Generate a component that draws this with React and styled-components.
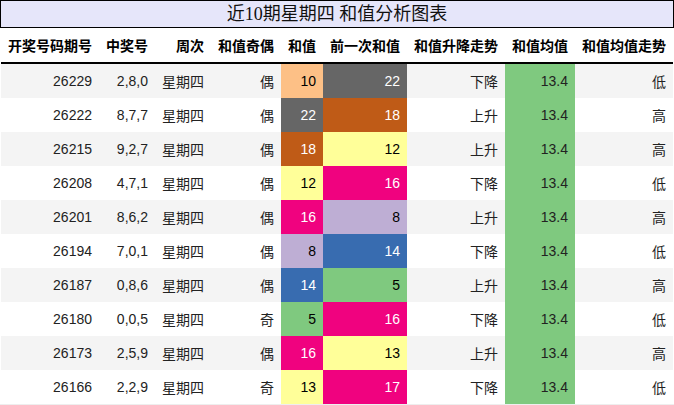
import React from 'react';
import styled, { createGlobalStyle } from 'styled-components';

const GlobalStyle = createGlobalStyle`
  body {
    margin: 0;
    background: #fff;
    font-family: "Liberation Sans", "Noto Sans CJK SC", sans-serif;
  }
`;

const columns = ['开奖号码期号', '中奖号', '周次', '和值奇偶', '和值', '前一次和值', '和值升降走势', '和值均值', '和值均值走势'];

const rows = [
  { issue: '26229', nums: '2,8,0', parity: '偶', sum: 10, prev: 22, trend: '下降', level: '低' },
  { issue: '26222', nums: '8,7,7', parity: '偶', sum: 22, prev: 18, trend: '上升', level: '高' },
  { issue: '26215', nums: '9,2,7', parity: '偶', sum: 18, prev: 12, trend: '上升', level: '高' },
  { issue: '26208', nums: '4,7,1', parity: '偶', sum: 12, prev: 16, trend: '下降', level: '低' },
  { issue: '26201', nums: '8,6,2', parity: '偶', sum: 16, prev: 8, trend: '上升', level: '高' },
  { issue: '26194', nums: '7,0,1', parity: '偶', sum: 8, prev: 14, trend: '下降', level: '低' },
  { issue: '26187', nums: '0,8,6', parity: '偶', sum: 14, prev: 5, trend: '上升', level: '高' },
  { issue: '26180', nums: '0,0,5', parity: '奇', sum: 5, prev: 16, trend: '下降', level: '低' },
  { issue: '26173', nums: '2,5,9', parity: '偶', sum: 16, prev: 13, trend: '上升', level: '高' },
  { issue: '26166', nums: '2,2,9', parity: '奇', sum: 13, prev: 17, trend: '下降', level: '低' },
];

// accent palette, picked per value
const swatch = {
  5: ['#7fc97f', '#000'],
  8: ['#beaed4', '#000'],
  10: ['#fdc086', '#000'],
  12: ['#ffff99', '#000'],
  13: ['#ffff99', '#000'],
  14: ['#386cb0', '#fff'],
  16: ['#f0027f', '#fff'],
  17: ['#f0027f', '#fff'],
  18: ['#bf5b17', '#fff'],
  22: ['#666666', '#fff'],
};

export default function App() {
  return (
    <Page>
      <GlobalStyle />
      <Title>近10期星期四 和值分析图表</Title>
      <Grid>
        {columns.map(c => <Head key={c}>{c}</Head>)}
        {rows.map((r, i) => {
          const shade = i % 2 === 0;
          return (
            <React.Fragment key={r.issue}>
              <Cell $shade={shade}>{r.issue}</Cell>
              <Cell $shade={shade}>{r.nums}</Cell>
              <Cell $shade={shade}>星期四</Cell>
              <Cell $shade={shade}>{r.parity}</Cell>
              <Cell $bg={swatch[r.sum][0]} $fg={swatch[r.sum][1]}>{r.sum}</Cell>
              <Cell $bg={swatch[r.prev][0]} $fg={swatch[r.prev][1]}>{r.prev}</Cell>
              <Cell $shade={shade}>{r.trend}</Cell>
              <Cell $bg="#7fc97f">13.4</Cell>
              <Cell $shade={shade}>{r.level}</Cell>
            </React.Fragment>
          );
        })}
      </Grid>
    </Page>
  );
}

const Page = styled.div`
  width: 674px;
`;

const Title = styled.div`
  height: 26px;
  border: 1px solid #000;
  background: #e6e6fa;
  color: #111;
  font-family: "Liberation Serif", "Noto Sans CJK SC", serif;
  font-size: 18px;
  line-height: 26px;
  text-align: center;
`;

const Grid = styled.div`
  display: grid;
  grid-template-columns: 98px 56px 56px 70px 42px 84px 98px 70px 98px;
  grid-template-rows: 36px;
  grid-auto-rows: 34px;
  padding: 0 1px;
  border-bottom: 1px solid #eeeeee;
`;

const Head = styled.div`
  display: flex;
  align-items: center;
  justify-content: flex-end;
  padding: 0 7px;
  font-size: 14px;
  font-weight: bold;
  color: #000;
  white-space: nowrap;
  border-bottom: 2px solid #000;
`;

const Cell = styled.div`
  display: flex;
  align-items: center;
  justify-content: flex-end;
  padding: 0 7px;
  font-size: 14px;
  white-space: nowrap;
  color: ${p => p.$fg || '#222'};
  background: ${p => p.$bg || (p.$shade ? '#f4f4f4' : '#ffffff')};
`;
